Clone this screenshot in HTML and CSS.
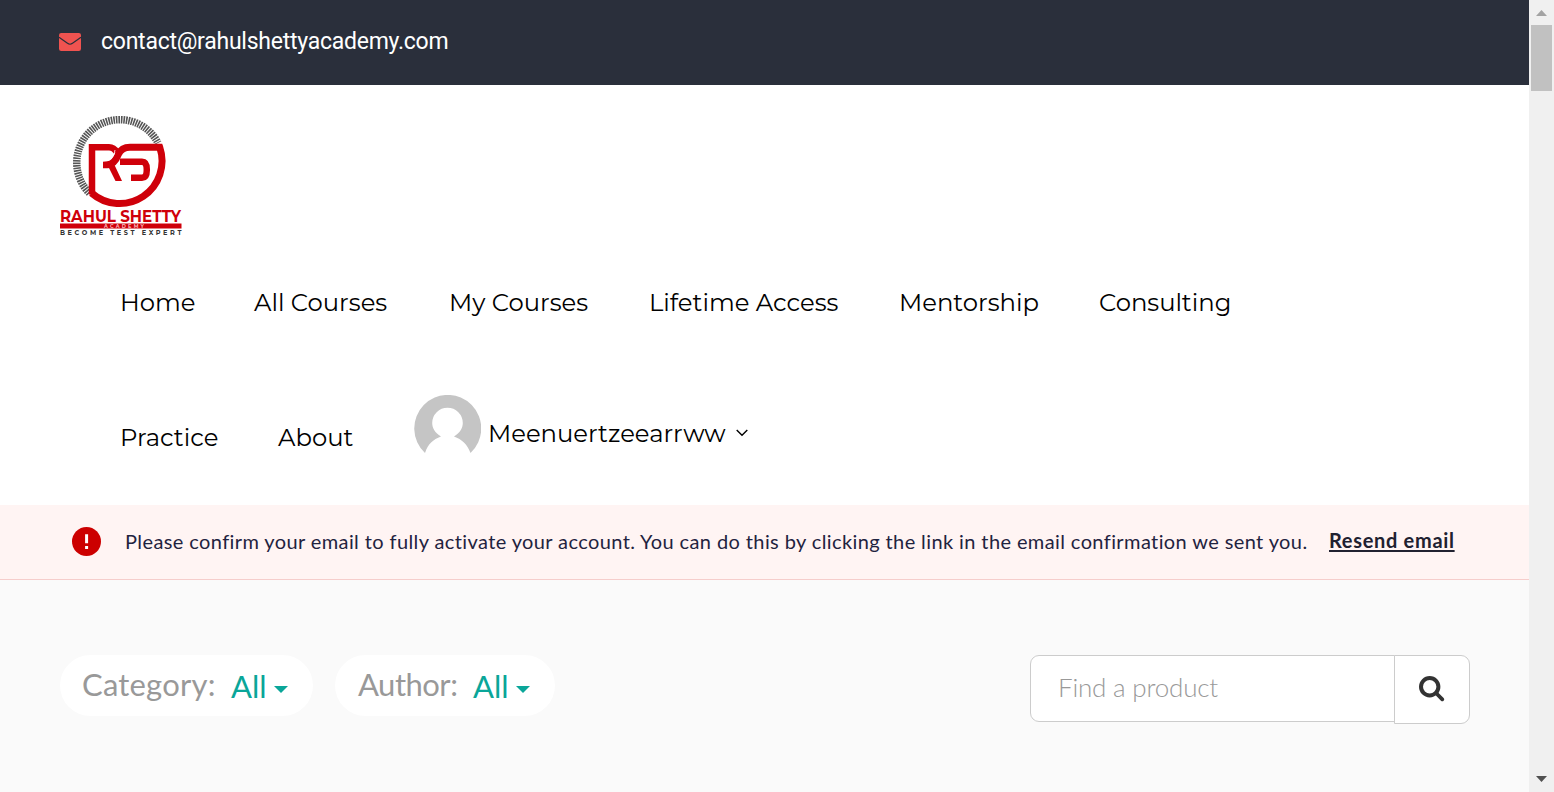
FILE: index.html
```html
<!DOCTYPE html>
<html lang="en">
<head>
<meta charset="utf-8">
<title>Rahul Shetty Academy</title>
<link rel="stylesheet" href="styles.css">
</head>
<body>
<div class="page">
  <div class="topbar">
    <svg class="mail" viewBox="0 0 22 18"><rect width="22" height="18" rx="2.2" fill="#ef5350"/><path d="M0 4.2 L8.500 10.300 Q11 12.200 13.500 10.300 L22 4.200" fill="none" stroke="#2a2f3b" stroke-width="1.200"/></svg>
    <span class="contact">contact@rahulshettyacademy.com</span>
  </div>
  <header class="header">
    <svg class="logo" viewBox="60 114 122 122">
      <path d="M89.500 193.200 A43 43 0 1 1 158 143" fill="none" stroke="#555" stroke-width="7.500" stroke-dasharray="1.600 .9"/>
      <path d="M92 194.500 V147.200 H109 Q114 147.200 116.500 152" fill="none" stroke="#cf000a" stroke-width="6.500"/>
      <path d="M91.500 193 A42.500 42.500 0 0 0 159.700 147.200 H130 Q121.500 147.200 118.500 154 Q114.500 164.800 107 164.800 H103" fill="none" stroke="#cf000a" stroke-width="7"/>
      <path d="M115 150 Q114 161 103 161.300" fill="none" stroke="#fff" stroke-width=".8"/>
      <path d="M108.500 167 L114.500 165 L122 181 H115.500 Z" fill="#cf000a"/>
      <path d="M120 161.800 H142 Q146.800 161.800 146.800 169.700 Q146.800 177.800 142 177.800 H131" fill="none" stroke="#cf000a" stroke-width="6.500"/>
      <text class="logo-name" x="60" y="222" textLength="121" lengthAdjust="spacingAndGlyphs">RAHUL SHETTY</text>
      <rect x="60" y="223.500" width="121.500" height="5" fill="#cf000a"/>
      <text class="logo-sub" x="104" y="228" textLength="40">ACADEMY</text>
      <text class="logo-tag" x="60" y="235" textLength="121.500">BECOME TEST EXPERT</text>
    </svg>
    <nav class="nav">
      <div class="nav-row">
        <a class="w-home">Home</a><a class="w-all">All Courses</a><a class="w-my">My Courses</a><a class="w-life">Lifetime Access</a><a class="w-mentor">Mentorship</a><a class="w-consult">Consulting</a>
      </div>
      <div class="nav-row second">
        <a class="w-practice">Practice</a><a class="w-about">About</a>
        <div class="user">
          <svg class="avatar" viewBox="0 0 67 67"><path d="M11 58 A33.500 33.500 0 1 1 56.500 58 C53 49 48 44.500 40 41.500 C46 38 48.800 33 48.800 28 A15.300 15.300 0 0 0 18.200 28 C18.200 33 21 38 27 41.500 C19 44.500 14 49 11 58Z" fill="#c5c5c5"/></svg>
          <span class="username">Meenuertzeearrww</span>
          <svg class="chev" viewBox="0 0 12 8"><path d="M.7 1 L6 6.300 L11.300 1" fill="none" stroke="#000" stroke-width="1.400"/></svg>
        </div>
      </div>
    </nav>
  </header>
  <div class="notice">
    <svg class="alert" viewBox="0 0 29 29"><circle cx="14.500" cy="14.500" r="14.500" fill="#c00"/><path d="M13.100 7.300h3v9h-3zM13.100 19h3v3h-3z" fill="#fff"/></svg>
    <span class="notice-text">Please confirm your email to fully activate your account. You can do this by clicking the link in the email confirmation we sent you.</span>
    <a class="resend">Resend email</a>
  </div>
  <main class="filters">
    <div class="pill category"><span class="label">Category:</span><span class="value">All</span><i class="caret"></i></div>
    <div class="pill author"><span class="label">Author:</span><span class="value">All</span><i class="caret"></i></div>
    <div class="search">
      <div class="field"><span>Find a product</span></div>
      <div class="search-button"><svg viewBox="0 0 26 26"><circle cx="10.700" cy="10.700" r="8.700" fill="none" stroke="#333" stroke-width="4"/><path d="M17 17 L23.300 23.300" stroke="#333" stroke-width="3.800" stroke-linecap="round"/></svg></div>
    </div>
  </main>
</div>
<div class="scrollbar">
  <svg class="arrow" viewBox="0 0 11 6"><path d="M0 6 L5.500 0 L11 6Z" fill="#a3a3a3"/></svg>
  <div class="thumb"></div>
  <svg class="arrow down" viewBox="0 0 11 6"><path d="M0 0 H11 L5.500 6Z" fill="#505050"/></svg>
</div>
</body>
</html>
```
FILE: styles.css
```css
* { box-sizing: border-box; }
body { margin: 0; height: 792px; overflow: hidden; display: flex; background: #fff; font-family: Montserrat, Inter, sans-serif; }
.page { width: 1529px; height: 792px; display: flex; flex-direction: column; }
.topbar { height: 85px; background: #2a2f3b; display: flex; align-items: center; padding: 0 0 1px 59px; gap: 20px; }
.mail { width: 22px; height: 18px; }
.contact { font: 23px/30px Roboto, sans-serif; color: #fff; white-space: nowrap; margin-top: 0; letter-spacing: -0.25px; }
.header { height: 420px; padding: 29px 0 0 60px; }
.logo { display: block; width: 122px; height: 122px; overflow: visible; }
.logo-name { font: 700 16px Montserrat, Inter, sans-serif; fill: #cf000a; }
.logo-sub { font: 700 5px Montserrat, Inter, sans-serif; fill: #f6b5b8; }
.logo-tag { font: 700 6.500px Montserrat, Inter, sans-serif; fill: #333; }
.nav { padding: 0 0 0 60px; margin-top: -2px; }
.nav-row { height: 135px; display: flex; align-items: center; gap: 60px; font-size: 24.3px; color: #000; white-space: nowrap; }
.w-home { width: 74px; }
.w-all { width: 135px; }
.w-my { width: 140px; }
.w-life { width: 190px; }
.w-mentor { width: 140px; }
.w-practice { width: 98px; }
.w-about { width: 76px; }
.user { display: flex; align-items: center; margin-top: -17px; }
.avatar { width: 67px; height: 67px; margin-right: 7px; }
.username { width: 240px; margin-top: 10px; }
.chev { width: 12px; height: 8px; margin: 10px 0 0 8px; }
.notice { height: 75px; flex: none; background: #fff4f3; border-bottom: 1px solid #f6cdcb; display: flex; align-items: center; padding: 0 0 2px 72px; color: #1f2340; white-space: nowrap; font: 20px Lato, sans-serif; }
.alert { width: 29px; height: 29px; margin-right: 24px; }
.notice-text { width: 1204px; letter-spacing: 0.395px; margin-top: -1px; }
.resend { font-weight: 700; color: #212130; letter-spacing: 0.68px; margin-top: -3px; text-decoration: underline; text-decoration-thickness: 2px; text-underline-offset: 2px; }
.filters { flex: 1; background: #fafafa; padding: 75px 59px 0 60px; display: flex; align-items: flex-start; font-family: Lato, sans-serif; }
.pill { height: 61px; border-radius: 31px; background: #fff; display: flex; align-items: center; font-size: 31px; white-space: nowrap; }
.category { width: 253px; padding-left: 22px; margin-right: 22px; }
.author { width: 220px; padding-left: 23px; }
.label { color: #999; width: 149px; margin-top: -4px; letter-spacing: 0.2px; }
.author .label { width: 115px; letter-spacing: -0.5px; }
.value { color: #0aa699; width: 43px; margin-top: 1px; }
.caret { border: 7.5px solid transparent; border-width: 7px 7.5px 0; border-top-color: #0aa699; margin-top: 8px; }
.search { display: flex; margin-left: auto; width: 440px; height: 69px; }
.field { width: 365px; height: 67px; background: #fff; border: 1px solid #ccc; border-radius: 9px 0 0 9px; padding: 0 0 4px 27px; display: flex; align-items: center; font-size: 26px; font-weight: 300; letter-spacing: -0.2px; color: #999; }
.search-button { width: 76px; height: 69px; margin-left: -1px; background: #fff; border: 1px solid #ccc; border-radius: 0 9px 9px 0; display: flex; align-items: center; justify-content: center; }
.search-button svg { width: 26px; height: 26px; margin-top: -2px; }
.scrollbar { width: 25px; height: 792px; background: #f0f0f0; display: flex; flex-direction: column; align-items: center; padding: 10px 0 10px; }
.arrow { width: 11px; height: 6px; }
.thumb { width: 21px; height: 66px; background: #c1c1c1; margin: 9px 0 0 0; }
.down { margin-top: auto; }
```
